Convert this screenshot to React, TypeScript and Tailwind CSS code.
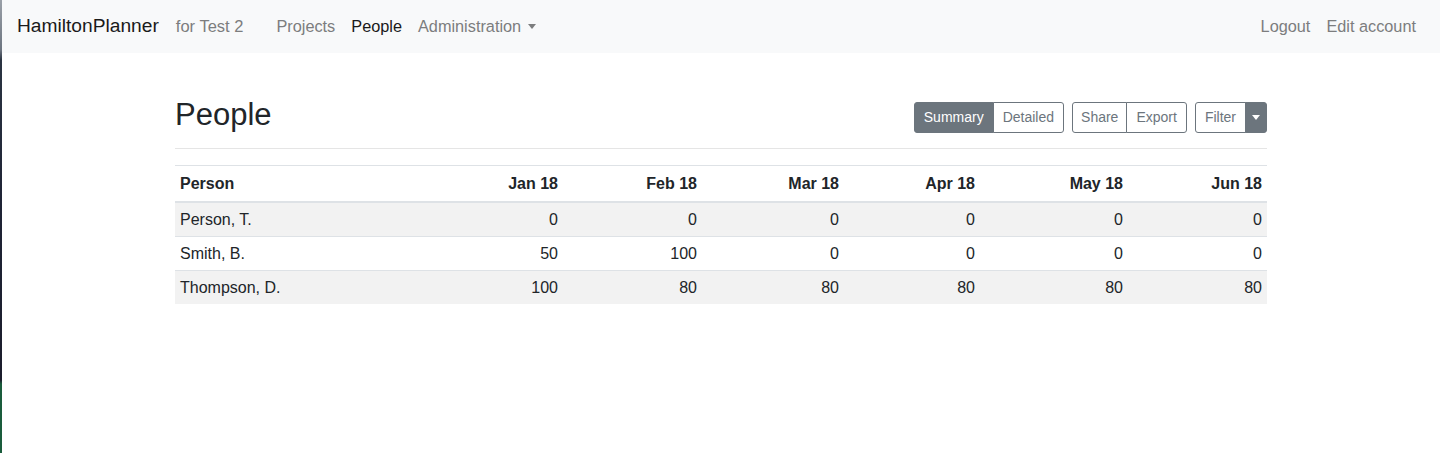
const months = ["Jan 18", "Feb 18", "Mar 18", "Apr 18", "May 18", "Jun 18"];
const colWidths = ["w-[138px]", "w-[139px]", "w-[142px]", "w-[136px]", "w-[148px]", "w-[139px]"];

const rows = [
  { name: "Person, T.", values: [0, 0, 0, 0, 0, 0] },
  { name: "Smith, B.", values: [50, 100, 0, 0, 0, 0] },
  { name: "Thompson, D.", values: [100, 80, 80, 80, 80, 80] },
];

const Caret = ({ className }: { className: string }) => (
  <span
    className={`inline-block w-0 h-0 border-x-[4.5px] border-x-transparent border-t-[5px] ${className}`}
  />
);

const NavBar = () => {
  return (
    <nav className="h-[53px] bg-[#f8f9fa] flex items-center pl-[15px] pr-4">
      <a href="/" className="text-[19.2px] text-[#1a1a1a] mr-[17px]">
        HamiltonPlanner
      </a>
      <span className="text-[16.5px] text-[#7c7d7e]">for Test 2</span>
      <ul className="flex ml-[25px]">
        <li>
          <a href="/" className="px-2 text-[16.3px] text-[#7c7d7e]">
            Projects
          </a>
        </li>
        <li>
          <a href="/" className="px-2 text-[16.3px] text-[#1a1a1a]">
            People
          </a>
        </li>
        <li>
          <a href="/" className="px-2 text-[16.3px] text-[#7c7d7e] flex items-center">
            Administration
            <Caret className="ml-[7px] border-t-[#7c7d7e]" />
          </a>
        </li>
      </ul>
      <ul className="flex ml-auto">
        <li>
          <a href="/" className="px-2 text-[16.3px] text-[#7c7d7e]">
            Logout
          </a>
        </li>
        <li>
          <a href="/" className="px-2 text-[16.3px] text-[#7c7d7e]">
            Edit account
          </a>
        </li>
      </ul>
    </nav>
  );
};

const Toolbar = () => {
  const btn = "h-[31px] text-[14px] leading-[21px] border border-[#6c757d] flex items-center";
  return (
    <div className="flex items-center">
      <div className="flex mr-2">
        <button className={`${btn} px-[9px] bg-[#6c757d] text-white rounded-l-[3px]`}>Summary</button>
        <button className={`${btn} px-[9px] text-[#6c757d] bg-white -ml-px rounded-r-[3px]`}>Detailed</button>
      </div>
      <div className="flex mr-2">
        <button className={`${btn} px-2 text-[#6c757d] bg-white rounded-l-[3px]`}>Share</button>
        <button className={`${btn} px-[9px] text-[#6c757d] bg-white -ml-px rounded-r-[3px]`}>Export</button>
      </div>
      <div className="flex">
        <button className={`${btn} px-[9px] text-[#6c757d] bg-white rounded-l-[3px]`}>Filter</button>
        <button className="h-[31px] w-[22px] -ml-px bg-[#6c757d] border border-[#6c757d] rounded-r-[3px] flex items-center justify-center">
          <Caret className="border-t-white" />
        </button>
      </div>
    </div>
  );
};

export default function App() {
  return (
    <div
      className="flex h-[453px] bg-white text-[#212529] text-[16px]"
      style={{ fontFamily: '"Liberation Sans", Arial, sans-serif' }}
    >
      <div className="w-[2px] shrink-0 bg-[linear-gradient(to_bottom,#9aa0a8_0px,#6d7580_50px,#2b3442_60px,#1f2436_200px,#1b1d2c_380px,#1a5c3c_384px,#1a5c3c_453px)]" />
      <div className="flex-1">
        <NavBar />
        <main className="w-[1092px] mx-auto pt-[25px]">
          <div className="flex justify-between items-center pt-4 pb-2 mb-4 border-b border-[#e5e5e5]">
            <h2 className="text-[31px] leading-[38px] pt-[2px] mb-[6px]">People</h2>
            <Toolbar />
          </div>
          <table className="w-full border-collapse">
            <thead>
              <tr className="border-t border-[#dee2e6] border-b-2">
                <th className="text-left font-bold px-[5px] pt-[6px] pb-[5px] leading-6 w-[250px]">Person</th>
                {months.map((m, i) => (
                  <th
                    key={m}
                    className={`text-right font-bold px-[5px] pt-[6px] pb-[5px] leading-6 ${colWidths[i]}`}
                  >
                    {m}
                  </th>
                ))}
              </tr>
            </thead>
            <tbody>
              {rows.map((r, idx) => (
                <tr
                  key={r.name}
                  className={`border-t border-[#dee2e6] ${idx % 2 === 0 ? "bg-[#f2f2f2]" : "bg-white"}`}
                >
                  <td className="px-[5px] pt-[4.5px] pb-[4.5px] leading-6">{r.name}</td>
                  {r.values.map((v, i) => (
                    <td key={i} className="px-[5px] pt-[4.5px] pb-[4.5px] leading-6 text-right">
                      {v}
                    </td>
                  ))}
                </tr>
              ))}
            </tbody>
          </table>
        </main>
      </div>
    </div>
  );
}
